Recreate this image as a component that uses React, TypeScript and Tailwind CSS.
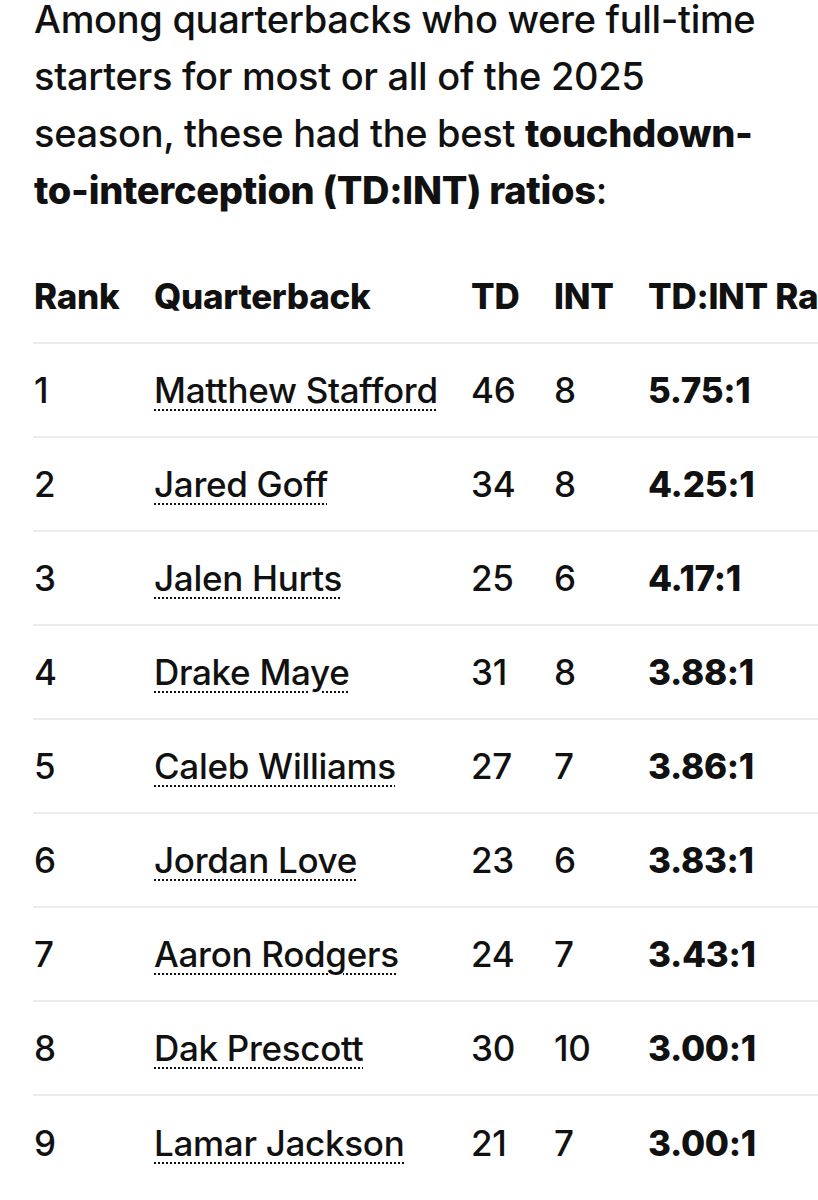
import React from "react";

const rows = [
  ["1", "Matthew Stafford", "46", "8", "5.75:1"],
  ["2", "Jared Goff", "34", "8", "4.25:1"],
  ["3", "Jalen Hurts", "25", "6", "4.17:1"],
  ["4", "Drake Maye", "31", "8", "3.88:1"],
  ["5", "Caleb Williams", "27", "7", "3.86:1"],
  ["6", "Jordan Love", "23", "6", "3.83:1"],
  ["7", "Aaron Rodgers", "24", "7", "3.43:1"],
  ["8", "Dak Prescott", "30", "10", "3.00:1"],
  ["9", "Lamar Jackson", "21", "7", "3.00:1"],
];

export default function App() {
  return (
    <div className="w-[818px] h-[1200px] overflow-hidden bg-white text-[#111111] font-medium font-['Inter',_'Noto_Sans',_sans-serif]">
      <p className="mt-[-9px] pl-[34px] pr-[40px] text-[38px] leading-[57px] tracking-[-0.3px]">
        Among quarterbacks who were full-time starters for most or all of the 2025 season, these had the best{" "}
        <b className="font-extrabold">touchdown-to-interception (TD:INT) ratios</b>:
      </p>
      <div className="mt-[31px] ml-[33px] text-[35px] tracking-[-0.3px] whitespace-nowrap">
        <div className="grid grid-cols-[120px_317px_83px_94px_1fr] h-[94px] items-center border-b-2 border-[#ececec] pl-[1px] font-extrabold">
          <div>Rank</div>
          <div>Quarterback</div>
          <div>TD</div>
          <div>INT</div>
          <div>TD:INT Ratio</div>
        </div>
        {rows.map((r, i) => (
          <div
            key={r[0]}
            className={`grid grid-cols-[120px_317px_83px_94px_1fr] h-[94px] items-center pl-[1px] ${
              i < rows.length - 1 ? "border-b-2 border-[#ececec]" : ""
            }`}
          >
            <div>{r[0]}</div>
            <div>
              <span className="underline decoration-dotted decoration-2 underline-offset-[7px]">{r[1]}</span>
            </div>
            <div>{r[2]}</div>
            <div>{r[3]}</div>
            <div className="font-extrabold">{r[4]}</div>
          </div>
        ))}
      </div>
    </div>
  );
}
